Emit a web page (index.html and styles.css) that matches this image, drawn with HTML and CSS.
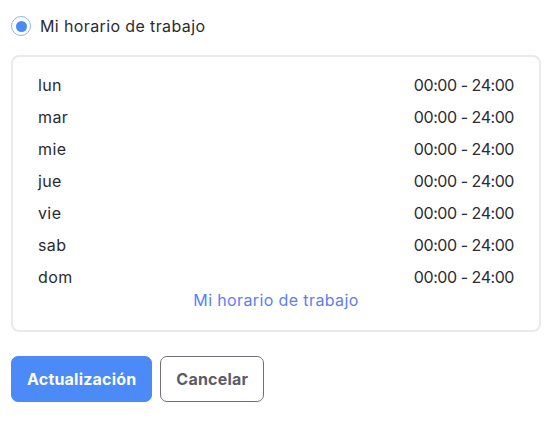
FILE: index.html
```html
<!DOCTYPE html>
<html lang="es">

<head>
    <meta charset="UTF-8">
    <meta name="viewport" content="width=device-width, initial-scale=1.0">
    <title>Mi horario de trabajo</title>
    <link rel="stylesheet" href="styles.css">
</head>

<body>
    <div class="page">
        <label class="radio-row">
            <span class="radio"><span class="radio-dot"></span></span>
            <span class="radio-label">Mi horario de trabajo</span>
        </label>

        <div class="schedule">
            <div class="day-row"><span>lun</span><span class="time">00:00 - 24:00</span></div>
            <div class="day-row"><span>mar</span><span class="time">00:00 - 24:00</span></div>
            <div class="day-row"><span>mie</span><span class="time">00:00 - 24:00</span></div>
            <div class="day-row"><span>jue</span><span class="time">00:00 - 24:00</span></div>
            <div class="day-row"><span>vie</span><span class="time">00:00 - 24:00</span></div>
            <div class="day-row"><span>sab</span><span class="time">00:00 - 24:00</span></div>
            <div class="day-row"><span>dom</span><span class="time">00:00 - 24:00</span></div>
            <a class="schedule-link" href="#">Mi horario de trabajo</a>
        </div>

        <div class="actions">
            <button class="btn btn-primary">Actualización</button>
            <button class="btn btn-default">Cancelar</button>
        </div>
    </div>
</body>

</html>
```

FILE: styles.css
```css
body {
    margin: 0;
    font-family: Inter, "Open Sans", sans-serif;
    color: #2a2b33;
    background: #fff;
    letter-spacing: 0.38px;
}

.page {
    padding: 16px 5px 0 11px;
}

.radio-row {
    display: flex;
    align-items: center;
    gap: 9px;
    height: 20px;
    font-size: 16px;
}

.radio {
    width: 20px;
    height: 20px;
    box-sizing: border-box;
    border: 1.5px solid #8fb3f7;
    border-radius: 50%;
    display: flex;
    align-items: center;
    justify-content: center;
}

.radio-dot {
    width: 11px;
    height: 11px;
    border-radius: 50%;
    background-color: #4b8af7;
}

.schedule {
    margin-top: 19px;
    border: 2px solid #e9e9ee;
    border-radius: 8px;
    padding: 12px 25px 20px 25px;
    display: flex;
    flex-direction: column;
}

.day-row {
    display: flex;
    justify-content: space-between;
    height: 32px;
    line-height: 32px;
    font-size: 16px;
}

.time {
    letter-spacing: -0.45px;
}

.schedule-link {
    align-self: center;
    margin-top: -3px;
    line-height: 20px;
    font-size: 16px;
    color: #5a7ef5;
    text-decoration: none;
}

.actions {
    display: flex;
    gap: 8px;
    margin-top: 24px;
}

.btn {
    height: 46px;
    padding: 0 15px;
    font-family: Inter, sans-serif;
    font-size: 16px;
    font-weight: bold;
    letter-spacing: 0.2px;
    border-radius: 7px;
    cursor: pointer;
}

.btn-primary {
    background-color: #4b8af7;
    border: 1px solid #4b8af7;
    color: #fff;
}

.btn-default {
    background-color: #fff;
    border: 1px solid #6e717c;
    color: #5a5d68;
}
```
